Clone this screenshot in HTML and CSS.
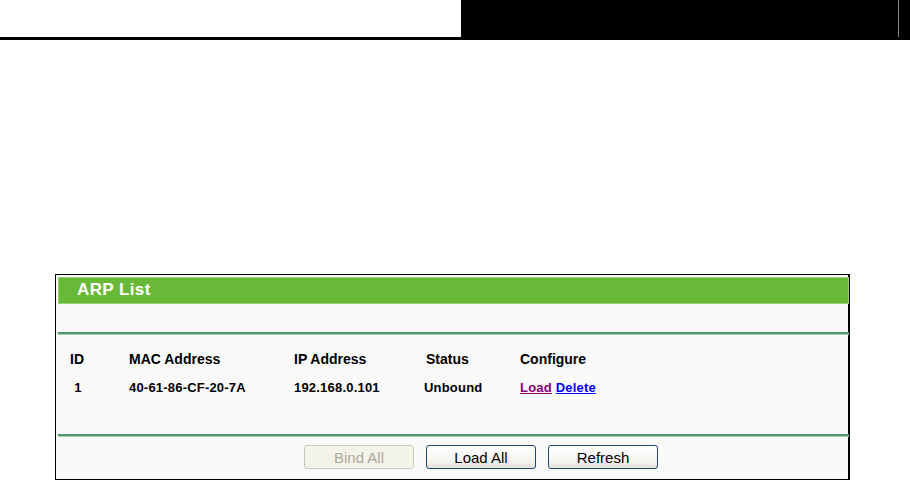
FILE: index.html
```html
<!DOCTYPE html>
<html lang="en">
<head>
  <meta charset="UTF-8">
  <title>ARP List</title>
  <link rel="stylesheet" href="styles.css">
</head>
<body>
  <div class="top">
    <div class="top-left"></div>
    <div class="top-right">
      <div class="divider"></div>
    </div>
  </div>
  <div class="top-line"></div>

  <div class="panel">
    <div class="panel-title">ARP List</div>
    <div class="spacer"></div>
    <div class="rule"></div>

    <div class="arp-table">
      <div class="row head">
        <div class="cell id">ID</div>
        <div class="cell">MAC Address</div>
        <div class="cell">IP Address</div>
        <div class="cell">Status</div>
        <div class="cell">Configure</div>
      </div>
      <div class="row item">
        <div class="cell id">1</div>
        <div class="cell">40-61-86-CF-20-7A</div>
        <div class="cell">192.168.0.101</div>
        <div class="cell status">Unbound</div>
        <div class="cell"><a href="#" class="load">Load</a> <a href="#" class="delete">Delete</a></div>
      </div>
    </div>

    <div class="rule"></div>
    <div class="buttons">
      <button type="button" class="btn" disabled>Bind All</button>
      <button type="button" class="btn">Load All</button>
      <button type="button" class="btn">Refresh</button>
    </div>
  </div>
</body>
</html>
```

FILE: styles.css
```css
* {
  margin: 0;
  padding: 0;
  box-sizing: border-box;
  font-family: 'Liberation Sans', Arial, sans-serif;
}

body {
  background: #fff;
  width: 910px;
  height: 480px;
  overflow: hidden;
}

.top {
  display: flex;
  height: 37px;
}

.top-left {
  width: 461px;
}

.top-right {
  flex: 1;
  background: #000;
  display: flex;
  justify-content: flex-end;
  padding-right: 11px;
}

.divider {
  width: 1px;
  height: 37px;
  background: #8a8a8a;
}

.top-line {
  height: 3px;
  background: #000;
}

.panel {
  margin: 234px 0 0 55px;
  width: 795px;
  height: 206px;
  border: 1px solid #000;
  border-right-width: 2px;
  background: #fafafa;
  padding: 2px 0 0 2px;
}

.panel-title {
  height: 27px;
  width: 791px;
  background: #67b937;
  border: 1px solid #9ad072;
  color: #fff;
  font-weight: bold;
  font-size: 17px;
  letter-spacing: 0.4px;
  line-height: 24px;
  padding-left: 18px;
}

.spacer {
  height: 28px;
}

.rule {
  width: 791px;
  height: 3px;
  border-top: 2px solid #4f9a6a;
  border-bottom: 1px solid #a9cfb5;
}

.arp-table {
  height: 99px;
  padding-top: 14px;
}

.row {
  display: grid;
  grid-template-columns: 71px 165px 132px 94px 1fr;
  align-items: center;
  color: #000;
  font-weight: bold;
}

.head {
  height: 20px;
  font-size: 14px;
}

.item {
  height: 28px;
  padding-top: 8px;
  font-size: 13px;
  letter-spacing: 0.2px;
}

.cell.id {
  width: 38px;
  text-align: center;
}

.item .cell.id {
  padding-left: 2px;
}

.status {
  margin-left: -2px;
}

.load {
  color: #800080;
}

.delete {
  color: #0000ff;
}

.buttons {
  display: flex;
  gap: 12px;
  padding: 8px 0 0 246px;
}

.btn {
  width: 110px;
  height: 24px;
  border: 1px solid #1c4676;
  border-radius: 3px;
  background: linear-gradient(#ffffff, #f4f3ee 70%, #e3e1d8);
  font-size: 15px;
  color: #000;
  padding-top: 1px;
}

.btn:disabled {
  border-color: #cac8bb;
  background: #f4f3ea;
  color: #aca899;
}
```
